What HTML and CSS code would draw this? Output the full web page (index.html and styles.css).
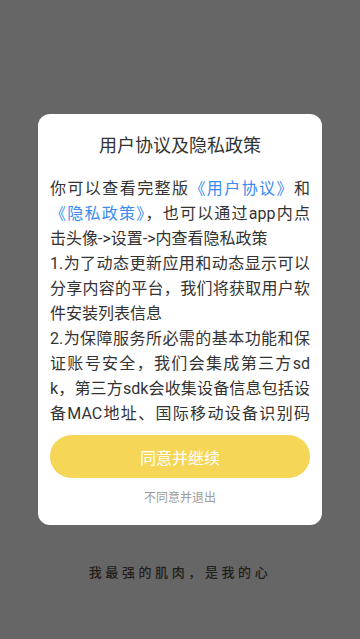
FILE: index.html
```html
<!DOCTYPE html>
<html lang="zh-CN">
<head>
<meta charset="utf-8">
<meta name="viewport" content="width=360, initial-scale=1">
<title>用户协议及隐私政策</title>
<link rel="stylesheet" href="styles.css">
</head>
<body>
<div class="screen">
  <div class="dialog">
    <div class="title">用户协议及隐私政策</div>
    <div class="content">
      <span class="line full">你可以查看完整版<span class="link">《用户协议》</span>和</span>
      <span class="line full"><span class="link">《隐私政策》</span>，也可以通过app内点</span>
      <span class="line">击头像-&gt;设置-&gt;内查看隐私政策</span>
      <span class="line full">1.为了动态更新应用和动态显示可以</span>
      <span class="line full">分享内容的平台，我们将获取用户软</span>
      <span class="line">件安装列表信息</span>
      <span class="line full">2.为保障服务所必需的基本功能和保</span>
      <span class="line full">证账号安全，我们会集成第三方sd</span>
      <span class="line full">k，第三方sdk会收集设备信息包括设</span>
      <span class="line full">备MAC地址、国际移动设备识别码</span>
    </div>
    <div class="agree">同意并继续</div>
    <div class="refuse">不同意并退出</div>
  </div>
  <div class="slogan">我最强的肌肉，是我的心</div>
</div>
</body>
</html>
```
FILE: styles.css
```css
html, body {
  margin: 0;
  padding: 0;
}
body {
  background: #666666;
  font-family: Roboto, "Noto Sans CJK SC", sans-serif;
}
.screen {
  width: 360px;
  height: 639px;
  overflow: hidden;
  display: flex;
  flex-direction: column;
  align-items: center;
}
.dialog {
  margin-top: 114px;
  width: 284px;
  height: 411px;
  box-sizing: border-box;
  background: #ffffff;
  border-radius: 12px;
  padding: 18px 12px 17px;
  display: flex;
  flex-direction: column;
  overflow: hidden;
}
.title {
  font-size: 18px;
  line-height: 28px;
  color: #333333;
  text-align: center;
}
.content {
  margin-top: 16px;
  font-size: 16px;
  line-height: 25px;
  color: #333333;
  display: flex;
  flex-direction: column;
}
.line {
  display: block;
  white-space: nowrap;
}
.line.full {
  text-align: justify;
  text-align-last: justify;
}
.link {
  color: #3a8cf0;
}
.agree {
  margin-top: 9px;
  flex-shrink: 0;
  height: 43px;
  border-radius: 22px;
  background: #f6d656;
  color: #ffffff;
  font-size: 16px;
  display: flex;
  align-items: center;
  justify-content: center;
}
.refuse {
  margin-top: 10px;
  font-size: 12px;
  line-height: 20px;
  color: #9a9a9a;
  text-align: center;
}
.slogan {
  margin-top: 37px;
  font-family: "Noto Sans CJK SC", sans-serif;
  font-size: 13px;
  font-weight: 500;
  line-height: 20px;
  letter-spacing: 3.6px;
  color: #221e1b;
}
```
